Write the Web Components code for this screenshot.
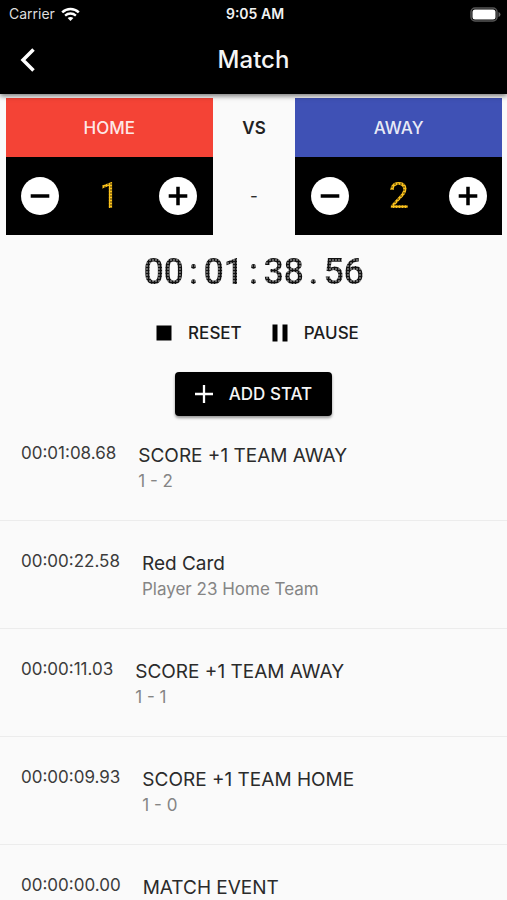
<!DOCTYPE html>
<html lang="en">
<head>
<meta charset="utf-8">
<meta name="viewport" content="width=device-width, initial-scale=1">
<title>Match</title>
<style>
html, body { margin: 0; height: 100%; background: #fafafa; }
body { font-family: Inter, Roboto, sans-serif; color: #2b2b2b; }
</style>
</head>
<body>
<match-screen></match-screen>
<script>
class BaseElement extends HTMLElement {
  render(html) {
    if (!this.shadowRoot) this.attachShadow({ mode: 'open' });
    this.shadowRoot.innerHTML = html;
  }
}

class StatusBar extends BaseElement {
  connectedCallback() {
    this.render(`
      <style>
        :host { display: grid; grid-template-columns: 1fr auto 1fr; align-items: center; height: 28px; padding: 0 6px 0 9px; background: #000; color: #ddd; font-size: 14px; line-height: 20px; }
        .carrier { display: flex; align-items: center; gap: 6px; }
        .time { color: #f2f2f2; font-weight: 600; }
        .battery { justify-self: end; }
        svg { display: block; }
      </style>
      <div class="carrier"><span>Carrier</span>
        <svg width="19" height="15" viewBox="0 0 19 15" fill="none" stroke="#fff" aria-hidden="true">
          <path d="M1.2 5.4C6 .9 13 .9 17.8 5.4" stroke-width="2.5"/>
          <path d="M4.1 8.6C7.2 5.8 11.8 5.8 14.9 8.6" stroke-width="2.3"/>
          <path d="M9.5 14L6.6 11.1Q9.5 8.7 12.4 11.1Z" fill="#fff" stroke="none"/>
        </svg>
      </div>
      <div class="time">9:05 AM</div>
      <svg class="battery" width="31" height="15" viewBox="0 0 31 15" aria-hidden="true">
        <rect x="1" y="1" width="26" height="13" rx="4" fill="#000" stroke="#555" stroke-width="1.5"/>
        <rect x="2.500" y="2.500" width="23" height="10" rx="2.500" fill="#fff"/>
        <path d="M28.5 5q2 .8 2 2.500t-2 2.500z" fill="#666"/>
      </svg>`);
  }
}

class AppBar extends BaseElement {
  connectedCallback() {
    this.render(`
      <style>
        :host { display: grid; grid-template-columns: 56px 1fr 56px; align-items: start; height: 66px; background: #000; color: #fff; }
        button { display: grid; place-items: center; width: 56px; height: 64px; padding: 0; border: 0; background: none; }
        h1 { margin: 0; text-align: center; font-size: 24px; line-height: 64px; font-weight: 500; color: #f5f5f5; }
      </style>
      <button aria-label="Back"><svg width="16" height="26" viewBox="0 0 16 26" fill="none" stroke="#fff" stroke-width="3.5"><path d="M13.5 2.500L3 13L13.5 23.500"/></svg></button>
      <h1><slot></slot></h1>`);
  }
}

/* Digits set in equal cells and seen through a grid of round dots. */
class DotDisplay extends BaseElement {
  connectedCallback() {
    const cells = [...this.getAttribute('value')].map(c => `<span>${c}</span>`).join('');
    this.render(`
      <style>
        :host { display: inline-flex; justify-content: center; font: var(--dot-weight, 500) 36px/36px Roboto, sans-serif; color: var(--dot-color, #111);
          -webkit-mask: radial-gradient(circle, #000 55%, rgba(0,0,0,.25) 80%) 0 0 / 3px 3px;
          mask: radial-gradient(circle, #000 55%, rgba(0,0,0,.25) 80%) 0 0 / 3px 3px; }
        span { display: block; width: 20px; text-align: center; }
      </style>${cells}`);
  }
}

class TeamPanel extends BaseElement {
  connectedCallback() {
    this.render(`
      <style>
        :host { display: block; background: #000; }
        .name { display: grid; place-items: center; height: 59px; background: var(--team); color: #ffffffe6; font-size: 17px; line-height: 24px; font-weight: 500; }
        .score { display: grid; grid-template-columns: 1fr 1fr 1fr; place-items: center; height: 78px; }
        button { display: grid; place-items: center; width: 38px; height: 38px; padding: 0; border: 0; border-radius: 50%; background: #fff; }
        dot-display { --dot-color: #fbc21b; --dot-weight: 400; }
      </style>
      <div class="name"><slot></slot></div>
      <div class="score">
        <button aria-label="Decrease score"><svg width="20" height="20" viewBox="0 0 20 20" stroke="#000" stroke-width="3.5"><path d="M.7 10H19.3"/></svg></button>
        <dot-display value="${this.getAttribute('score')}"></dot-display>
        <button aria-label="Increase score"><svg width="20" height="20" viewBox="0 0 20 20" stroke="#000" stroke-width="3.5"><path d="M.7 10H19.3M10 .7V19.3"/></svg></button>
      </div>`);
  }
}

class ScoreBoard extends BaseElement {
  connectedCallback() {
    this.render(`
      <style>
        :host { display: grid; grid-template-columns: 5fr 2fr 5fr; padding: 4px 5px 0 6px; }
        .home { --team: #f44336; }
        .away { --team: #3f51b5; }
        .middle { display: grid; grid-template-rows: 59px 78px; place-items: center; font-size: 17px; line-height: 24px; }
        b { font-weight: 600; color: #222; }
      </style>
      <team-panel class="home" score="1">HOME</team-panel>
      <div class="middle"><b>VS</b><span>-</span></div>
      <team-panel class="away" score="2">AWAY</team-panel>`);
  }
}

class ActionButton extends BaseElement {
  connectedCallback() {
    this.render(`
      <style>
        :host { display: inline-flex; }
        button { display: flex; align-items: center; gap: 16px; height: 44px; padding: 0; border: 0; background: none; font: 500 17px/24px Inter, Roboto, sans-serif; color: #1c1c1c; }
        :host([raised]) button { padding: 0 20px; border-radius: 4px; background: #000; color: #f5f5f5; box-shadow: 0 2px 3px #0006; }
      </style>
      <button><slot name="icon"></slot><span><slot></slot></span></button>`);
  }
}

class MatchClock extends BaseElement {
  connectedCallback() {
    this.render(`
      <style>
        :host { display: flex; flex-direction: column; align-items: center; padding-top: 19px; }
        .actions { display: flex; gap: 30px; margin: 21px 0 17px; padding-left: 8px; }
        svg { display: block; }
      </style>
      <dot-display value="00:01:38.56"></dot-display>
      <div class="actions">
        <action-button><svg slot="icon" width="16" height="16" viewBox="0 0 16 16"><path d="M.5.5h15v15H.5z"/></svg>RESET</action-button>
        <action-button><svg slot="icon" width="16" height="18" viewBox="0 0 16 18"><path d="M.5.5h5v17h-5zM10.5.5h5v17h-5z"/></svg>PAUSE</action-button>
      </div>
      <action-button raised><svg slot="icon" width="18" height="18" viewBox="0 0 18 18" stroke="#fff" stroke-width="2.3"><path d="M0 9H18M9 0V18"/></svg>ADD STAT</action-button>`);
  }
}

class EventRow extends BaseElement {
  connectedCallback() {
    this.render(`
      <style>
        :host { display: flex; gap: 22px; box-sizing: border-box; height: 108px; padding: 29px 21px 0; border-bottom: 1px solid #ececec; }
        time { font-size: 17px; line-height: 22px; color: #3c3c3c; }
        .title { font-size: 19px; line-height: 27px; color: #2b2b2b; }
        .detail { font-size: 17px; line-height: 24px; color: #858585; }
      </style>
      <time>${this.getAttribute('time')}</time>
      <div><div class="title"><slot></slot></div><div class="detail"><slot name="detail"></slot></div></div>`);
  }
}

class MatchScreen extends BaseElement {
  connectedCallback() {
    this.render(`
      <style>
        :host { display: flex; flex-direction: column; height: 100vh; overflow: hidden; }
        header { flex: none; position: relative; z-index: 1; box-shadow: 0 2px 5px #0008; }
        score-board, match-clock { flex: none; }
        main { flex: 1; min-height: 0; margin-top: -3px; overflow-y: auto; scrollbar-width: none; }
      </style>
      <header><status-bar></status-bar><app-bar>Match</app-bar></header>
      <score-board></score-board>
      <match-clock></match-clock>
      <main>
        <event-row time="00:01:08.68">SCORE +1 TEAM AWAY<span slot="detail">1 - 2</span></event-row>
        <event-row time="00:00:22.58">Red Card<span slot="detail">Player 23 Home Team</span></event-row>
        <event-row time="00:00:11.03">SCORE +1 TEAM AWAY<span slot="detail">1 - 1</span></event-row>
        <event-row time="00:00:09.93">SCORE +1 TEAM HOME<span slot="detail">1 - 0</span></event-row>
        <event-row time="00:00:00.00">MATCH EVENT</event-row>
      </main>`);
  }
}

customElements.define('status-bar', StatusBar);
customElements.define('app-bar', AppBar);
customElements.define('dot-display', DotDisplay);
customElements.define('team-panel', TeamPanel);
customElements.define('score-board', ScoreBoard);
customElements.define('action-button', ActionButton);
customElements.define('match-clock', MatchClock);
customElements.define('event-row', EventRow);
customElements.define('match-screen', MatchScreen);
</script>
</body>
</html>
